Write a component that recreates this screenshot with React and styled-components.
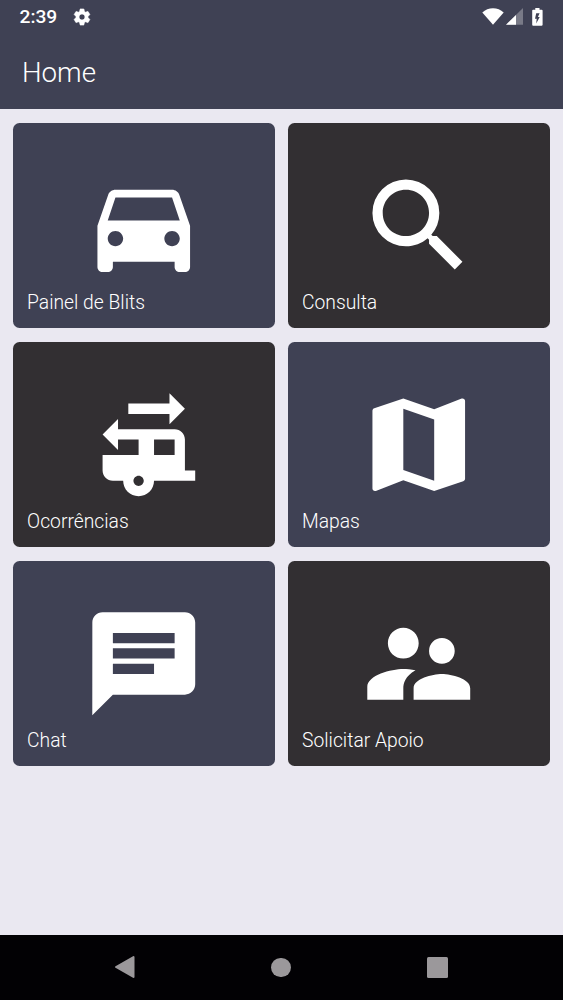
import React from 'react'
import styled, {createGlobalStyle} from 'styled-components';
//icons
import {
    MdDirectionsCar,
    MdSearch,
    MdRvHookup,
    MdMap,
    MdChat,
    MdSupervisorAccount,
    MdSettings
} from 'react-icons/md';


const cards = [
    {label: "Painel de Blits", icon: MdDirectionsCar, color: "#3f4154"},
    {label: "Consulta", icon: MdSearch, color: "#322f32"},
    {label: "Ocorrências", icon: MdRvHookup, color: "#322f32"},
    {label: "Mapas", icon: MdMap, color: "#3f4154"},
    {label: "Chat", icon: MdChat, color: "#3f4154"},
    {label: "Solicitar Apoio", icon: MdSupervisorAccount, color: "#322f32"},
];

const StatusBar = () => {
    return (
        <Status>
            <Clock>2:39</Clock>
            <Gear size={20} />
            <Indicators>
                {/* wifi */}
                <svg width="22" height="17" viewBox="0 0 22 17">
                    <path d="M.3 4.4C3.2 1.7 7 .2 11 .2s7.8 1.5 10.7 4.2L11 16.7z" fill="#fff" />
                </svg>
                {/* signal */}
                <svg width="18" height="17" viewBox="0 0 18 17">
                    <path d="M17 0v16.7H0z" fill="#fff" fillOpacity=".3" />
                    <path d="M10 7v9.7H0z" fill="#fff" />
                </svg>
                {/* battery charging */}
                <Battery width="11" height="18" viewBox="0 0 11 18">
                    <path fillRule="evenodd" d="M3.3 0h4.2v1.7h2.2c.5 0 .9.4.9.9v14.2c0 .5-.4.9-.9.9H1.1c-.5 0-.9-.4-.9-.9V2.6c0-.5.4-.9.9-.9h2.2zM4.2 5.2L3 10.7h1.7l-.5 4.9 3.5-6.7H5.9l1.7-3.7z" fill="#fff" />
                </Battery>
            </Indicators>
        </Status>
    )
};

const App = () => {
    return (
        <Screen>
            <GlobalStyle />

            <Header>
                <StatusBar />
                <Title>Home</Title>
            </Header>

            <Cards>
                {cards.map(({label, icon: Icon, color}) => (
                    <Card key={label} $color={color}>
                        <Picture>
                            <Icon size={123.5} />
                        </Picture>
                        <Label>{label}</Label>
                    </Card>
                ))}
            </Cards>

            <NavBar>
                <svg width="22" height="24" viewBox="0 0 22 24">
                    <path d="M2 12L19.5 2v20z" fill="#9b989b" stroke="#9b989b" strokeWidth="2" strokeLinejoin="round" />
                </svg>
                <HomeButton />
                <RecentButton />
            </NavBar>
        </Screen>
    )
};

const GlobalStyle = createGlobalStyle`
    * {
        margin: 0;
        padding: 0;
        box-sizing: border-box;
    }
    body {
        font-family: Roboto, sans-serif;
        background: #eae8f1;
    }
    svg {
        display: block;
        flex-shrink: 0;
    }
`;

const Screen = styled.div`
    height: 1000px;
    display: flex;
    flex-direction: column;
    overflow: hidden;
    color: white;
`;

const Header = styled.header`
    height: 109.3px;
    background: #3f4154;
`;

const Status = styled.div`
    height: 33px;
    padding: 0 20px 0 19.5px;
    display: flex;
    align-items: center;
`;

const Clock = styled.span`
    width: 52px;
    font-size: 19.2px;
    font-weight: 500;
    line-height: 35px;
`;

const Gear = styled(MdSettings)`
    stroke: none;

    path:last-child {
        stroke: white;
        stroke-width: 0.8px;
    }
`;

const Indicators = styled.div`
    margin-left: auto;
    display: flex;
    align-items: center;
    gap: 2px;
`;

const Battery = styled.svg`
    margin-left: 6px;
`;

const Title = styled.h1`
    padding-left: 22px;
    font-size: 27.7px;
    font-weight: 300;
    line-height: 80px;
`;

const Cards = styled.main`
    flex: 1;
    padding: 13.9px 13.4px 0;
    display: grid;
    grid-template-columns: 1fr 1fr;
    grid-auto-rows: 205px;
    align-content: start;
    gap: 13.7px;
`;

const Card = styled.div`
    display: grid;
    border-radius: 6.5px;
    background: ${props => props.$color};
`;

/* picture and label share one grid cell */
const Picture = styled.div`
    grid-area: 1 / 1;
    place-self: center;
    padding: 0.9px 0 0 0.2px;
`;

const Label = styled.h2`
    grid-area: 1 / 1;
    align-self: end;
    padding: 0 13.7px 13px;
    font-size: 19.3px;
    font-weight: 300;
    line-height: 24px;
`;

const NavBar = styled.nav`
    height: 65.5px;
    padding: 0 115.5px 0 113.5px;
    display: flex;
    align-items: center;
    justify-content: space-between;
    background: #020104;
`;

const HomeButton = styled.div`
    width: 19.5px;
    height: 19.5px;
    border-radius: 50%;
    background: #9b989b;
`;

const RecentButton = styled.div`
    width: 21px;
    height: 21px;
    border-radius: 1.5px;
    background: #9b989b;
`;

export default App;
